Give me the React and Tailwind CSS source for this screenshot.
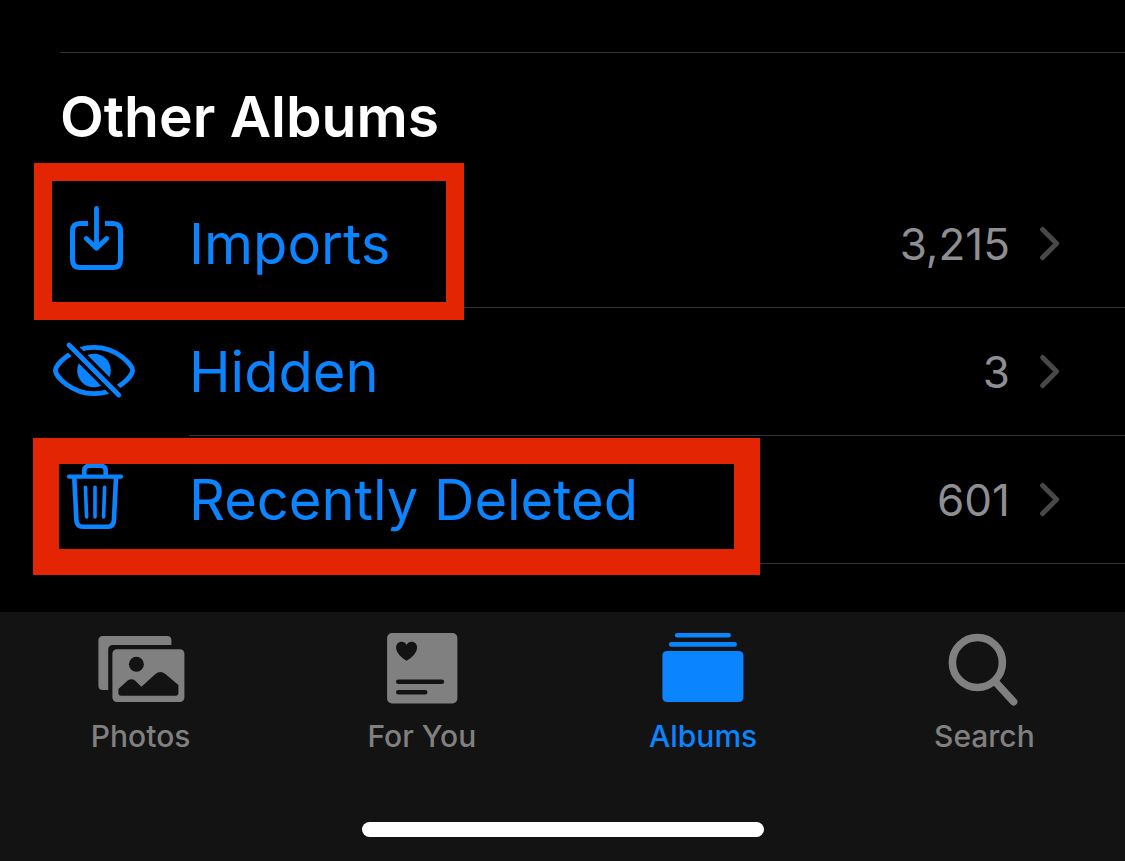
function ImportIcon() {
  return (
    <svg viewBox="0 0 88 80" className="h-20 w-22 shrink-0" fill="none" stroke="currentColor" strokeWidth="5" aria-hidden="true">
      <path d="M36 19.5H28Q20.5 19.5 20.5 27V56Q20.5 63.5 28 63.5H61Q68.5 63.5 68.5 56V27Q68.5 19.5 61 19.5H53" />
      <path d="M44.5 4.5V43.5M34.3 34.5L44.5 44.3L54.7 34.5" strokeWidth="4.8" strokeLinecap="round" strokeLinejoin="round" />
    </svg>
  );
}

function HiddenIcon() {
  return (
    <svg viewBox="0 0 88 80" className="h-20 w-22 shrink-0" fill="none" aria-hidden="true">
      <path
        d="M3.4 38.5C3.4 33 19 15.4 42 15.4S80.6 33 80.6 38.5S65 61.7 42 61.7S3.4 44 3.4 38.5Z"
        stroke="currentColor"
        strokeWidth="4.8"
      />
      <circle cx="42" cy="38.5" r="16.8" fill="currentColor" />
      <path d="M12 8L72 68.3" stroke="#000" strokeWidth="12" />
      <path d="M17 13L66.7 63" stroke="currentColor" strokeWidth="4.8" strokeLinecap="round" />
    </svg>
  );
}

function TrashIcon() {
  return (
    <svg viewBox="0 0 88 80" className="h-20 w-22 shrink-0" fill="none" stroke="currentColor" strokeWidth="4.6" strokeLinecap="round" aria-hidden="true">
      <path d="M17 16.7H69" strokeWidth="4.2" />
      <path d="M32.3 15V11Q32.3 5.8 37.5 5.8H48.5Q53.7 5.8 53.7 11V15" />
      <path d="M22.3 18L24.4 60.5Q24.8 66.8 31 66.8H55.3Q61.5 66.8 61.9 60.5L64 18" />
      <path d="M33.4 27.2L34.6 57M43 27.2V57M52.6 27.2L51.6 57" strokeWidth="3.6" />
    </svg>
  );
}

function Chevron() {
  return (
    <svg viewBox="0 0 24 40" className="h-10 w-6 shrink-0 text-[#48484a]" fill="none" stroke="currentColor" strokeWidth="5" strokeLinecap="round" strokeLinejoin="round" aria-hidden="true">
      <path d="M4.6 5.5L18.6 19.5L4.6 33.5" />
    </svg>
  );
}

function PhotosIcon() {
  return (
    <svg viewBox="0 0 96 80" className="h-20 w-24" fill="currentColor" aria-hidden="true">
      <path d="M10 8H74Q78.4 8 78.4 12.4V17H20Q15.2 17 15.2 22V62H10Q5.4 62 5.4 57.5V12.5Q5.4 8 10 8Z" />
      <rect x="19.4" y="21.3" width="72" height="52.7" rx="4.5" />
      <g className="text-[#131313]">
        <circle cx="43.4" cy="36.3" r="7.5" />
        <path d="M25.4 61L34.7 52.6Q38.4 50 42 52.6L48.4 58.7L62.4 46Q67.4 42 72.4 46L85.4 57V65Q85.4 67.7 82.7 67.7H28.1Q25.4 67.7 25.4 65Z" />
      </g>
    </svg>
  );
}

function ForYouIcon() {
  return (
    <svg viewBox="0 0 96 80" className="h-20 w-24" fill="currentColor" aria-hidden="true">
      <rect x="13.1" y="5" width="70.3" height="70.5" rx="5" />
      <g className="text-[#131313]">
        <path d="M32.6 32.7C29 31 22.1 25.5 22.1 19.6C22.1 16 24.5 13.7 27.5 13.7C29.8 13.7 31.6 14.8 32.6 17C33.6 14.8 35.4 13.7 37.7 13.7C40.7 13.7 43.1 16 43.1 19.6C43.1 25.5 36.2 31 32.6 32.7Z" />
        <path d="M24.3 53.7H67.9M24.3 64.3H51.2" stroke="currentColor" strokeWidth="4.6" strokeLinecap="round" />
      </g>
    </svg>
  );
}

function AlbumsIcon() {
  return (
    <svg viewBox="0 0 96 80" className="h-20 w-24" fill="currentColor" aria-hidden="true">
      <rect x="19.9" y="5" width="56" height="4.6" rx="2.3" />
      <rect x="13.9" y="14" width="68" height="4.7" rx="2.3" />
      <rect x="7.4" y="23" width="81" height="51" rx="4.5" />
    </svg>
  );
}

function SearchIcon() {
  return (
    <svg viewBox="0 0 96 80" className="h-20 w-24" fill="none" stroke="currentColor" strokeWidth="7.6" strokeLinecap="round" aria-hidden="true">
      <circle cx="41.4" cy="34.5" r="25" />
      <path d="M60 54.5L77.6 73.7" />
    </svg>
  );
}

const albums = [
  {
    name: "Imports",
    count: "3,215",
    Icon: ImportIcon,
    highlight: "-top-[17px] left-[34px] h-[157px] w-[430px] border-[18px]",
  },
  { name: "Hidden", count: "3", Icon: HiddenIcon },
  {
    name: "Recently Deleted",
    count: "601",
    Icon: TrashIcon,
    highlight: "top-[2px] left-[33px] h-[137px] w-[727px] border-[26px]",
  },
];

const tabs = [
  { name: "Photos", Icon: PhotosIcon },
  { name: "For You", Icon: ForYouIcon },
  { name: "Albums", Icon: AlbumsIcon, active: true },
  { name: "Search", Icon: SearchIcon },
];

function AlbumRow({ name, count, Icon, highlight }) {
  return (
    <li className="relative">
      <a href="#" className="flex h-32 items-center pl-[52px] text-[#0a84ff]">
        <Icon />
        <span className="ml-[49px] flex h-full min-w-0 flex-1 items-center border-b border-[#343436] pr-[63px]">
          <span className="flex-1 text-[56px] leading-none whitespace-nowrap">{name}</span>
          <span className="mr-7 text-[44px] leading-none text-[#8e8e93]">{count}</span>
          <Chevron />
        </span>
      </a>
      {highlight && <div className={`pointer-events-none absolute z-10 border-[#e42504] ${highlight}`} />}
    </li>
  );
}

export default function App() {
  return (
    <div className="flex min-h-screen flex-col bg-black font-['Inter',sans-serif]">
      <main className="flex-1 pt-[52px] pb-12">
        <h2 className="ml-[60px] flex h-32 items-center border-t border-[#343436] text-[57px] leading-none font-semibold text-white">
          Other Albums
        </h2>
        <ul>
          {albums.map((album) => (
            <AlbumRow key={album.name} {...album} />
          ))}
        </ul>
      </main>
      <nav className="bg-[#131313] pt-4 pb-6">
        <ul className="grid grid-cols-4">
          {tabs.map(({ name, Icon, active }) => (
            <li key={name}>
              <a
                href="#"
                aria-current={active ? "page" : undefined}
                className={`flex flex-col items-center gap-2 ${active ? "text-[#0a84ff]" : "text-[#808080]"}`}
              >
                <Icon />
                <span className="text-[30px] leading-10 font-medium">{name}</span>
              </a>
            </li>
          ))}
        </ul>
        <div className="mx-auto mt-[66px] h-[15px] w-[402px] rounded-full bg-white" />
      </nav>
    </div>
  );
}
